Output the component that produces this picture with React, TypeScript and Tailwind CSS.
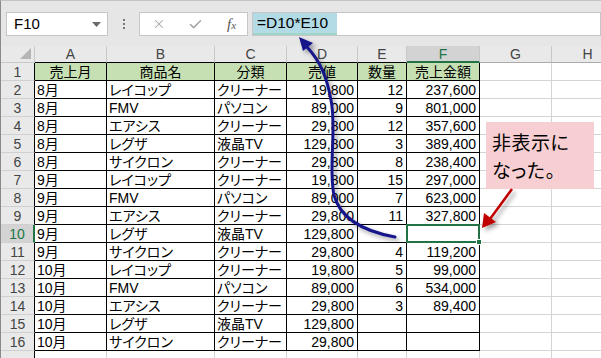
import { Check, X } from "lucide-react";

const widths = ["w-[72px]", "w-[108px]", "w-[72px]", "w-[71px]", "w-[49px]", "w-[73px]", "w-[72px]", "w-[72px]"];
const letters = ["A", "B", "C", "D", "E", "F", "G", "H"];

const header = ["売上月", "商品名", "分類", "売値", "数量", "売上金額"];

const rows: string[][] = [
  ["8月", "レイコップ", "クリーナー", "19,800", "12", "237,600"],
  ["8月", "FMV", "パソコン", "89,000", "9", "801,000"],
  ["8月", "エアシス", "クリーナー", "29,800", "12", "357,600"],
  ["8月", "レグザ", "液晶TV", "129,800", "3", "389,400"],
  ["8月", "サイクロン", "クリーナー", "29,800", "8", "238,400"],
  ["9月", "レイコップ", "クリーナー", "19,800", "15", "297,000"],
  ["9月", "FMV", "パソコン", "89,000", "7", "623,000"],
  ["9月", "エアシス", "クリーナー", "29,800", "11", "327,800"],
  ["9月", "レグザ", "液晶TV", "129,800", "", ""],
  ["9月", "サイクロン", "クリーナー", "29,800", "4", "119,200"],
  ["10月", "レイコップ", "クリーナー", "19,800", "5", "99,000"],
  ["10月", "FMV", "パソコン", "89,000", "6", "534,000"],
  ["10月", "エアシス", "クリーナー", "29,800", "3", "89,400"],
  ["10月", "レグザ", "液晶TV", "129,800", "", ""],
  ["10月", "サイクロン", "クリーナー", "29,800", "", ""],
];

function RowHeader({ n, label }: { n: number; label: string }) {
  const active = n === 10;
  return (
    <div
      className={`w-[34px] shrink-0 h-[18px] flex items-center justify-center border-b border-[#d0d0d0] text-[14px] leading-none ${
        active
          ? "bg-[#d3d3d3] text-[#217346] border-r-2 border-r-[#217346]"
          : "bg-[#e9e9e9] text-[#444] border-r border-r-black"
      }`}
    >
      {label}
    </div>
  );
}

function DataRow({ n, cells, label }: { n: number; cells: string[]; label: string }) {
  return (
    <div className="flex">
      <RowHeader n={n} label={label} />
      {widths.map((w, i) => {
        const inTable = i < 6 && n <= 16;
        const right = i >= 3 && i <= 5;
        const selected = n === 10 && i === 5;
        return (
          <div
            key={i}
            className={`${w} shrink-0 h-[18px] flex items-center px-[2px] text-[14px] leading-none whitespace-nowrap border-r border-b ${
              inTable ? "border-black" : "border-[#d4d4d4]"
            } ${right ? "justify-end pr-[3px]" : "justify-start"} ${selected ? "relative" : ""}`}
          >
            {cells[i] ?? ""}
            {selected && (
              <div className="absolute -left-[1px] -top-[1px] -right-[1px] -bottom-[1px] border-2 border-[#217346]">
                <div className="absolute -right-[4px] -bottom-[4px] w-[6px] h-[6px] bg-[#217346] border border-white" />
              </div>
            )}
          </div>
        );
      })}
    </div>
  );
}

export default function App() {
  return (
    <div className="relative w-[601px] h-[358px] overflow-hidden bg-white font-['Liberation_Sans','Noto_Sans_CJK_JP',sans-serif] [font-feature-settings:'palt'] text-black">
      {/* formula bar */}
      <div className="h-[46px] bg-[#e6e6e6] border-t border-t-[#c4c4c4] border-l border-l-[#8a8a8a] flex items-start pt-[11px]">
        <div className="ml-[5px] w-[102px] h-[24px] bg-white border border-[#c6c6c6] flex items-center pl-[7px] pr-[6px] text-[15px]">
          <span className="flex-1">F10</span>
          <svg width="9" height="5" viewBox="0 0 9 5">
            <path d="M0 0 L9 0 L4.5 5 Z" fill="#6a6a6a" />
          </svg>
        </div>
        <div className="w-[31px] h-[24px] flex flex-col items-center justify-center gap-[2px]">
          <span className="w-[2px] h-[2px] bg-[#777]" />
          <span className="w-[2px] h-[2px] bg-[#777]" />
          <span className="w-[2px] h-[2px] bg-[#777]" />
        </div>
        <div className="w-[109px] h-[24px] bg-white border border-[#c6c6c6] flex items-center">
          <X className="ml-[12px] w-[14px] h-[14px] text-[#a6a6a6]" strokeWidth={1.8} />
          <Check className="ml-[22px] w-[15px] h-[15px] text-[#a6a6a6]" strokeWidth={2.5} />
          <span className="ml-[24px] font-['Liberation_Serif',serif] italic text-[15px] text-[#555]">
            f<span className="text-[11px]">x</span>
          </span>
        </div>
        <div className="ml-[4px] flex-1 h-[24px] bg-white border border-[#c6c6c6] flex items-stretch">
          <div className="w-[84px] bg-[#b2dbe6] border-b-2 border-b-[#9fd6c8] flex items-center pl-[4px] text-[15.5px]">
            =D10*E10
          </div>
        </div>
      </div>

      {/* column headers */}
      <div className="flex h-[17px] border-l border-l-[#8a8a8a]">
        <div className="w-[34px] shrink-0 h-[17px] bg-[#e9e9e9] border-r border-b border-[#c8c8c8] relative">
          <svg className="absolute right-[3px] bottom-[3px]" width="11" height="11" viewBox="0 0 11 11">
            <path d="M11 0 L11 11 L0 11 Z" fill="#b5b5b5" />
          </svg>
        </div>
        {widths.map((w, i) => {
          const active = letters[i] === "F";
          return (
            <div
              key={i}
              className={`${w} shrink-0 h-[17px] flex items-center justify-center text-[14px] leading-none border-r border-r-[#c8c8c8] ${
                active
                  ? "bg-[#d3d3d3] text-[#217346] border-b-2 border-b-[#217346]"
                  : `bg-[#e9e9e9] text-[#444] border-b ${i < 6 ? "border-b-black" : "border-b-[#ababab]"}`
              }`}
            >
              {letters[i]}
            </div>
          );
        })}
      </div>

      {/* sheet body */}
      <div className="border-l border-l-[#8a8a8a]">
        <div className="flex">
          <div className="w-[34px] shrink-0 h-[18px] flex items-center justify-center bg-[#e9e9e9] text-[#444] text-[14px] leading-none border-b border-b-[#d0d0d0] border-r border-r-black">
            1
          </div>
          {widths.map((w, i) => (
            <div
              key={i}
              className={`${w} shrink-0 h-[18px] flex items-center justify-center text-[14px] leading-none border-r border-b ${
                i < 6 ? "bg-[#c6e0b4] border-black" : "border-[#d4d4d4]"
              }`}
            >
              {header[i] ?? ""}
            </div>
          ))}
        </div>
        {rows.map((r, idx) => (
          <DataRow key={idx} n={idx + 2} label={String(idx + 2)} cells={r} />
        ))}
        <DataRow n={17} label="" cells={[]} />
      </div>

      {/* callout */}
      <div className="absolute left-[486px] top-[122px] w-[108px] h-[67px] bg-[#f7cfd2] pl-[6px] pt-[6px] text-[19px] leading-[28px] font-['Noto_Sans_CJK_JP',sans-serif] tracking-[0.5px]">
        非表示に
        <br />
        なった。
      </div>

      {/* arrows */}
      <svg className="absolute left-0 top-0 pointer-events-none" width="601" height="358" viewBox="0 0 601 358">
        <defs>
          <filter id="sh" x="-20%" y="-20%" width="140%" height="140%">
            <feDropShadow dx="3" dy="3" stdDeviation="2" floodColor="#000" floodOpacity="0.35" />
          </filter>
        </defs>
        <g filter="url(#sh)">
          <path
            d="M395 237 C362 231 340 218 334 195 C328 168 337 130 331 100 C327 78 321 62 307 47"
            fill="none"
            stroke="#16168a"
            strokeWidth="3"
            strokeLinecap="round"
          />
          <path d="M299 37 L313 43 L303 51 Z" fill="#16168a" />
        </g>
        <g filter="url(#sh)">
          <path d="M512 189 L490 219" stroke="#c00000" strokeWidth="2.5" fill="none" />
          <path d="M482 228 L484 213 L496 222 Z" fill="#c00000" />
        </g>
      </svg>
    </div>
  );
}
